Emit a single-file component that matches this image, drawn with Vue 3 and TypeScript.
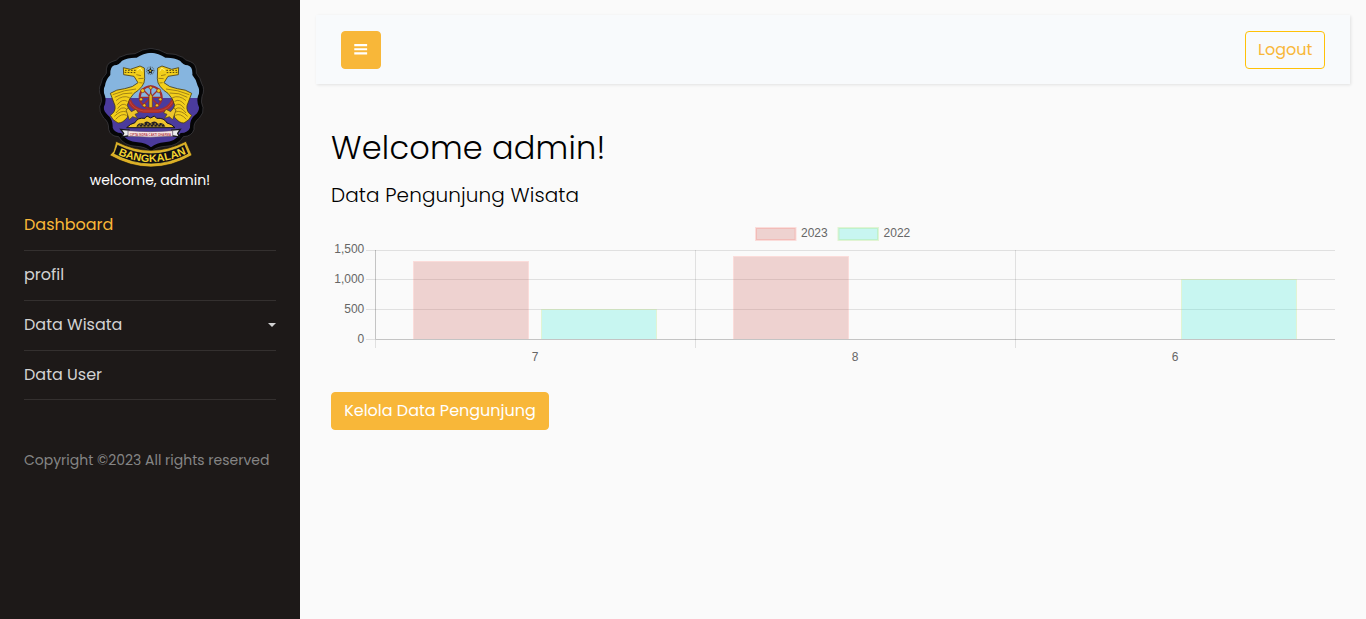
<script setup lang="ts">
interface MenuItem { label: string; active?: boolean; dropdown?: boolean }
interface Series { name: string; fill: string; stroke: string; values: number[] }

const menu: MenuItem[] = [
  { label: 'Dashboard', active: true },
  { label: 'profil' },
  { label: 'Data Wisata', dropdown: true },
  { label: 'Data User' },
]

const months = ['7', '8', '6']
const series: Series[] = [
  { name: '2023', fill: 'rgba(205,92,83,.25)', stroke: 'rgba(255,99,90,.2)', values: [1300, 1390, 0] },
  { name: '2022', fill: 'rgba(51,235,215,.25)', stroke: 'rgba(160,230,110,.28)', values: [500, 0, 1000] },
]

const plot = { left: 44.5, right: 1004, bottom: 119.5, height: 89.5, step: 320 }
const ticks = [
  { label: '1,500', y: 30.5, textY: 33 },
  { label: '1,000', y: 59.5, textY: 63 },
  { label: '500', y: 89.5, textY: 93 },
  { label: '0', y: 119.5, textY: 123 },
]

interface Bar { x: number; y: number; h: number; fill: string; stroke: string }
const bars: Bar[] = series.flatMap((s, si) =>
  s.values.flatMap((v, i) => {
    if (!v) return []
    const h = Math.round((v / 1500) * plot.height)
    return [{ x: 82.5 + i * plot.step + si * 128, y: plot.bottom - h, h, fill: s.fill, stroke: s.stroke }]
  }),
)
</script>

<template>
  <div class="wrapper">
    <nav class="sidebar">
      <div class="brand">
        <svg class="crest" viewBox="27 24 315 360" role="img" aria-label="Bangkalan">
          <defs>
            <path id="rim" d="M183 25Q157 27 135 41Q111 40 88 52Q82 62 66 65Q47 70 49 100Q34 115 33 131Q23 149 33 169Q38 184 29 200Q27 216 41 234Q57 245 56 268Q61 289 86 290Q102 318 140 319Q166 320 183 335Q200 320 226 319Q264 318 280 290Q306 289 312 268Q309 248 328 234Q342 219 339 203Q331 186 336 169Q346 149 335 131Q332 115 319 100Q321 72 301 65Q286 62 278 52Q257 40 231 41Q207 27 183 25Z" />
            <clipPath id="shield"><path d="M183 38Q160 40 140 53Q114 52 96 62Q88 74 73 76Q60 80 61 105Q47 120 45 137Q37 151 45 168Q50 184 41 202Q41 214 53 225Q69 237 68 263Q73 278 94 279Q110 306 143 307Q168 309 183 322Q200 309 223 307Q256 306 272 279Q295 278 300 263Q299 237 315 225Q328 214 327 202Q319 184 324 168Q332 151 323 137Q320 120 307 105Q309 80 293 76Q279 74 270 62Q252 52 226 53Q206 40 183 38Z" /></clipPath>
            <path id="ribbon-line" d="M80 342Q183 390 286 342" />
            <g id="dragon">
              <path d="M100 83L121 88L150 78L163 84L164 116Q164 130 155 140Q146 152 132 160Q116 176 112 196L118 212L112 232Q98 250 84 249Q66 240 61 226Q78 215 75 197L61 160Q78 148 104 146Q130 142 144 128L132 109L101 104Z" fill="#f3cf1b" stroke="#493c12" stroke-width="2.5" />
              <path d="M108 210L115 204L124 215L138 208L145 219L135 223L142 235L128 230L118 239Z" fill="#edc52b" stroke="#493c12" stroke-width="2" />
              <path d="M139 104L153 107M145 116L161 115M148 128L158 129M68 164Q104 149 138 147M74 172Q98 157 127 159M78 182Q98 164 119 173M82 194Q97 175 112 184M83 206Q96 186 110 196M78 219Q95 196 110 207M73 229Q93 209 110 216M77 238Q95 218 110 226" fill="none" stroke="#937413" stroke-width="2.5" />
              <path d="M104 97L137 98M105 91L137 91" stroke="#33290e" stroke-width="2.5" stroke-dasharray="5 4" />
              <path d="M141 91L151 84L157 94" fill="none" stroke="#fff48a" stroke-width="3" />
            </g>
          </defs>
          <use href="#rim" fill="#050506" stroke="#55555a" stroke-width="1.5" />
          <g clip-path="url(#shield)">
            <rect x="28" y="24" width="315" height="150" fill="#86b5df" />
            <rect x="28" y="174" width="315" height="160" fill="#4b3b9d" />
          </g>
          <circle cx="181" cy="92" r="11" fill="none" stroke="#617887" stroke-width="4" stroke-dasharray="3 2" />
          <path d="M181 82L184 89L191 90L185 95L187 102L181 98L175 102L177 95L171 90L178 89Z" fill="#171c1d" />
          <circle cx="181" cy="92" r="3" fill="#d6bb40" />
          <g stroke="#a52e2f" fill="none">
            <circle cx="182" cy="172" r="33" stroke-width="6" />
            <path d="M182 137V211M147 172H217M157 147L207 197M157 197L207 147" stroke-width="4" />
            <path d="M117 180Q128 209 161 213H205Q238 209 250 180" stroke-width="12" />
            <path d="M117 180Q128 209 161 213H205Q238 209 250 180" stroke="#d94e35" stroke-width="2" />
          </g>
          <use href="#dragon" />
          <use href="#dragon" transform="translate(366 0) scale(-1 1)" />
          <path d="M182 158L187 169V203H177V169Z" fill="#e5b91c" stroke="#642c22" stroke-width="2" />
          <g fill="#edc21b" stroke="#792723" stroke-width="2">
            <circle cx="182" cy="143" r="5" /><circle cx="158" cy="152" r="6" /><circle cx="206" cy="152" r="6" />
            <circle cx="153" cy="178" r="5" /><circle cx="211" cy="178" r="5" /><circle cx="163" cy="196" r="5" /><circle cx="201" cy="196" r="5" />
          </g>
          <path d="M110 263Q121 251 135 248Q142 232 165 235L171 228L182 234L193 228L200 235Q223 233 231 249Q245 252 255 263Z" fill="#efc52d" stroke="#16131b" stroke-width="3" />
          <path d="M139 260Q147 244 160 251Q170 238 181 250Q194 239 204 251Q219 244 226 260Z" fill="#201d27" />
          <path d="M149 252H218M145 258H223" stroke="#dab12b" stroke-width="3" stroke-dasharray="5 6" />
          <path d="M92 268L117 270V287L96 291L101 280ZM271 268L245 270V287L268 291L263 280Z" fill="#eee" stroke="#17171b" stroke-width="4" />
          <path d="M114 272Q182 278 248 272V289Q182 294 114 289Z" fill="#f7e7e8" stroke="#5d4b68" stroke-width="2" />
          <text class="motto" x="119" y="287" textLength="124" lengthAdjust="spacingAndGlyphs">CIPTA INDRA CAKTI DHARMA</text>
          <path d="M78 304Q183 358 288 304L306 346Q183 416 59 346L70 334Z" fill="#dcae24" stroke="#101012" stroke-width="2" />
          <path d="M82 313Q183 365 284 313L296 342Q183 402 71 342Z" fill="#111014" stroke="#f5d43e" stroke-width="2" />
          <text class="banner"><textPath href="#ribbon-line" startOffset="4" textLength="212" lengthAdjust="spacingAndGlyphs">BANGKALAN</textPath></text>
        </svg>
        <span class="greeting">welcome, admin!</span>
      </div>
      <ul class="menu">
        <li v-for="item in menu" :key="item.label" :class="{ active: item.active }">
          <a><span>{{ item.label }}</span><i v-if="item.dropdown" class="caret"></i></a>
        </li>
      </ul>
      <p class="copyright"><span>Copyright ©2023 All rights reserved</span></p>
    </nav>

    <main class="content">
      <header class="topbar">
        <button class="btn toggle" aria-label="Menu">
          <svg width="16" height="16" viewBox="0 0 16 16"><path d="M.3 1.2H15v2.6H.3zM.3 5.9H15v2.4H.3zM.3 10.5H15V13H.3z" fill="#fff" /></svg>
        </button>
        <button class="btn logout"><span>Logout</span></button>
      </header>
      <section class="page">
        <h2><span>Welcome admin!</span></h2>
        <h5><span>Data Pengunjung Wisata</span></h5>
        <svg class="chart" width="1004" height="150" viewBox="0 0 1004 150">
          <g class="axis">
            <path v-for="t in ticks" :key="t.label" :d="`M35 ${t.y}H1004`" />
            <path v-for="i in 3" :key="i" :d="`M${plot.left + (i - 1) * plot.step} 30V128`" />
            <path d="M44.5 30V119M45 119.5H1004" class="zero" />
          </g>
          <g v-for="(b, i) in bars" :key="i">
            <rect :x="b.x + 0.5" :y="b.y + 0.5" width="114" :height="b.h - 1" :fill="b.fill" />
            <path :d="`M${b.x} ${plot.bottom - 0.5}V${b.y}H${b.x + 115}V${plot.bottom - 0.5}`" :stroke="b.stroke" fill="none" />
          </g>
          <g v-for="(s, i) in series" :key="s.name">
            <rect :x="425 + i * 82.5" y="8" width="39.5" height="12" :fill="s.fill" :stroke="s.stroke" stroke-width="2" />
            <text :x="470 + i * 82.6" y="17">{{ s.name }}</text>
          </g>
          <text v-for="t in ticks" :key="'t' + t.label" x="33.3" :y="t.textY" text-anchor="end">{{ t.label }}</text>
          <text v-for="(m, i) in months" :key="'m' + m" :x="204 + i * plot.step" y="141" text-anchor="middle">{{ m }}</text>
        </svg>
        <button class="btn manage"><span>Kelola Data Pengunjung</span></button>
      </section>
    </main>
  </div>
</template>

<style>
body { margin: 0; background: #fafafa; }
</style>

<style scoped>
* { box-sizing: border-box; }
.wrapper { display: flex; height: 619px; overflow: hidden; font: 16px/24px Poppins, Inter, "Open Sans", sans-serif; color: #000; background: #fafafa; }
span { display: inline-block; white-space: nowrap; }
.sidebar { width: 300px; flex: none; padding: 48px 24px; background: #1d1918; color: #d2d2d2; }
.brand { display: flex; flex-direction: column; align-items: center; height: 152px; }
.crest { display: block; width: 105px; height: 120px; margin-left: 3px; }
.motto { font: bold 13px "Liberation Sans", sans-serif; fill: #b3414c; }
.banner { font: bold 32px "Liberation Sans", sans-serif; fill: #f4d52f; }
.greeting { margin-top: 1px; color: #fff; font-size: 14px; line-height: 22px; }
.menu { list-style: none; margin: 0; padding: 0; }
.menu li { height: 50px; border-bottom: 1px solid rgba(255, 255, 255, .1); }
.menu li:first-child { height: 51px; padding-top: 1px; }
.menu li:last-child { height: 49px; }
.menu a { display: flex; align-items: center; justify-content: space-between; height: 48px; }
.menu .active { color: #f8b739; }
.caret { border: 4.5px solid transparent; border-top-color: currentColor; border-bottom: 0; }
.copyright { margin: 48px 0 0; font-size: 14px; color: #858585; }
.content { flex: 1; padding: 15px 16px; min-width: 0; }
.topbar { display: flex; justify-content: space-between; align-items: center; height: 69px; padding: 0 25px; background: #f8fafc; box-shadow: 1px 1px 3px rgba(0, 0, 0, .1); }
.btn { height: 38px; padding: 0 12px; border: 1px solid #f8b739; border-radius: 4px; background: #f8b739; color: #fff; font: inherit; white-space: nowrap; }
.toggle { width: 40px; display: flex; align-items: center; justify-content: center; }
.logout { width: 80px; border-color: #ffc107; background: transparent; color: #f8b739; }
.page { padding: 45px 15px 0; }
h2 { margin: 0 0 12px; font-size: 32px; line-height: 38px; font-weight: 300; letter-spacing: .2px; }
h5 { margin: 0; font-size: 20px; line-height: 32px; font-weight: 300; letter-spacing: .1px; }
.chart { display: block; margin: 9px 0 22px; font: 12px "Liberation Sans", Arial, sans-serif; fill: #666; }
.axis path { stroke: rgba(0, 0, 0, .1); fill: none; }
.axis .zero { stroke: rgba(0, 0, 0, .12); }
.manage { width: 218px; }
</style>
